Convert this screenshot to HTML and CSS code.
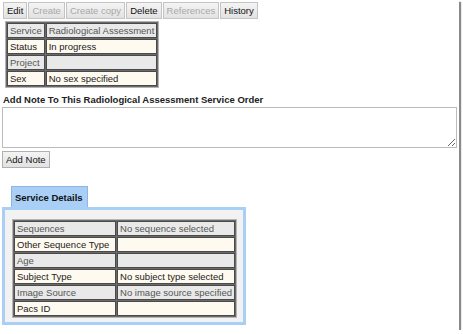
FILE: index.html
```html
<!DOCTYPE html>
<html lang="en">
<head>
  <meta charset="UTF-8">
  <title>Radiological Assessment Service Order</title>
  <link rel="stylesheet" href="styles.css">
</head>
<body>
  <div class="window">
    <div class="toolbar">
      <button class="tool">Edit</button>
      <button class="tool off">Create</button>
      <button class="tool off">Create copy</button>
      <button class="tool">Delete</button>
      <button class="tool off">References</button>
      <button class="tool">History</button>
    </div>

    <table class="info">
      <tr class="grey"><td>Service</td><td>Radiological Assessment</td></tr>
      <tr class="cream"><td>Status</td><td>In progress</td></tr>
      <tr class="grey"><td>Project</td><td></td></tr>
      <tr class="cream"><td>Sex</td><td>No sex specified</td></tr>
    </table>

    <div class="note-title">Add Note To This Radiological Assessment Service Order</div>
    <textarea class="note"></textarea>
    <button class="add-btn">Add Note</button>

    <div class="tabs">
      <div class="tab">Service Details</div>
    </div>
    <div class="panel">
      <table class="info details">
        <tr class="grey"><td class="lbl">Sequences</td><td class="val">No sequence selected</td></tr>
        <tr class="cream"><td class="lbl">Other Sequence Type</td><td class="val"></td></tr>
        <tr class="grey"><td class="lbl">Age</td><td class="val"></td></tr>
        <tr class="cream"><td class="lbl">Subject Type</td><td class="val">No subject type selected</td></tr>
        <tr class="grey"><td class="lbl">Image Source</td><td class="val">No image source specified</td></tr>
        <tr class="cream"><td class="lbl">Pacs ID</td><td class="val"></td></tr>
      </table>
    </div>
  </div>
</body>
</html>
```

FILE: styles.css
```css
body {
  margin: 0;
  background: #fff;
  font-family: "Liberation Sans", Arial, sans-serif;
  font-size: 9.5px;
  color: #222;
}
.window {
  width: 459px;
  height: 330px;
  box-shadow: 2px 2px 1px #8a8a8a;
  overflow: hidden;
  box-sizing: border-box;
  padding: 2px 0 0 2px;
}
.toolbar {
  display: flex;
  gap: 1px;
  margin-left: 1px;
}
.tool {
  font-family: "Liberation Sans", Arial, sans-serif;
  font-size: 9.5px;
  color: #111;
  background: linear-gradient(#f4f4f4, #e2e2e2);
  border: 1px solid #c4c4c4;
  padding: 1px 3px;
  height: 17px;
  border-radius: 0;
}
.tool.off {
  color: #a8a8a8;
}
.info {
  border: 1px solid #b5b5b5;
  border-collapse: separate;
  border-spacing: 1px;
  background: #6a6a6a;
  margin: 2px 0 0 3px;
}
.info td {
  border: 1px solid #4a4a4a;
  padding: 0 2px;
  height: 13px;
  line-height: 13px;
  white-space: nowrap;
}
.grey td {
  background: #e9e9e9;
  color: #555;
}
.cream td {
  background: #fffaf0;
  color: #222;
}
.note-title {
  font-weight: bold;
  margin: 6px 0 0 1px;
}
.note {
  display: block;
  width: 455px;
  height: 41px;
  box-sizing: border-box;
  border: 1px solid #bbb;
  margin: 2px 0 0 0;
  resize: both;
}
.add-btn {
  font-family: "Liberation Sans", Arial, sans-serif;
  font-size: 9.5px;
  color: #111;
  background: linear-gradient(#f4f4f4, #e2e2e2);
  border: 1px solid #b0b0b0;
  height: 17px;
  padding: 1px 3px;
  margin-top: 3px;
}
.tabs {
  display: flex;
  margin: 18px 0 0 9px;
}
.tab {
  background: #a9cff7;
  border: 1px solid #8fb6de;
  border-bottom: none;
  font-weight: bold;
  padding: 5px 4px 4px 3px;
  color: #111;
}
.panel {
  width: 244px;
  box-sizing: border-box;
  border: 3px solid #a9cff7;
  background: #f2f2f2;
  padding: 9px 8px 4px 7px;
  margin-left: 0;
}
.details {
  margin: 0;
  width: 225px;
}
.details .lbl {
  width: 98px;
}
```
